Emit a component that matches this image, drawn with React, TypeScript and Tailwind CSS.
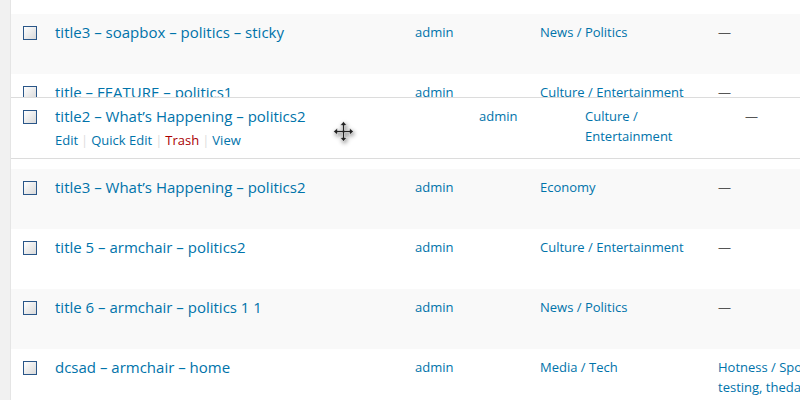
import React from 'react';

type Post = {
  title: string;
  author: string;
  category: string;
  tags?: string[];
  stripe: boolean;
};

const posts: Post[] = [
  { title: 'title3 – soapbox – politics – sticky', author: 'admin', category: 'News / Politics', stripe: true },
  { title: 'title – FEATURE – politics1', author: 'admin', category: 'Culture / Entertainment', stripe: false },
];

const morePosts: Post[] = [
  { title: 'title3 – What’s Happening – politics2', author: 'admin', category: 'Economy', stripe: true },
  { title: 'title 5 – armchair – politics2', author: 'admin', category: 'Culture / Entertainment', stripe: false },
  { title: 'title 6 – armchair – politics 1 1', author: 'admin', category: 'News / Politics', stripe: true },
  {
    title: 'dcsad – armchair – home',
    author: 'admin',
    category: 'Media / Tech',
    tags: ['Hotness / Sports,', 'testing, thedaily'],
    stripe: false,
  },
];

const Checkbox = () => (
  <span className="block w-[14px] h-[14px] border border-[#2a5688] bg-linear-to-br from-white to-[#d9d9d9]" />
);

const MoveCursor = () => (
  <svg
    width="21"
    height="21"
    viewBox="0 0 21 21"
    className="drop-shadow-[1px_2px_2px_rgba(0,0,0,0.45)]"
  >
    <g fill="#222" stroke="#fff" strokeWidth="0.6">
      <path d="M10.5 0.5 L14 4.5 L11.5 4.5 L11.5 9.5 L16.5 9.5 L16.5 7 L20.5 10.5 L16.5 14 L16.5 11.5 L11.5 11.5 L11.5 16.5 L14 16.5 L10.5 20.5 L7 16.5 L9.5 16.5 L9.5 11.5 L4.5 11.5 L4.5 14 L0.5 10.5 L4.5 7 L4.5 9.5 L9.5 9.5 L9.5 4.5 L7 4.5 Z" />
    </g>
  </svg>
);

const Row = ({ post }: { post: Post }) => (
  <div className={`flex shrink-0 h-[60px] ${post.stripe ? 'bg-[#f9f9f9]' : 'bg-white'}`}>
    <div className="w-[34px] shrink-0 pl-3 pt-3">
      <Checkbox />
    </div>
    <div className="w-[360px] shrink-0 px-[10px] pt-2">
      <a className="block text-[15px] leading-[21px] text-[#0073aa]">{post.title}</a>
    </div>
    <div className="w-[125px] shrink-0 px-[10px] pt-2 text-[13px] leading-[20px] text-[#0073aa]">
      {post.author}
    </div>
    <div className="w-[178px] shrink-0 px-[10px] pt-2 text-[13px] leading-[20px] text-[#0073aa]">
      {post.category}
    </div>
    <div className="w-[140px] shrink-0 px-[10px] pt-2 text-[13px] leading-[20px] whitespace-nowrap">
      {post.tags ? (
        post.tags.map((t) => (
          <span key={t} className="block text-[#0073aa]">{t}</span>
        ))
      ) : (
        <span className="text-[#555]">—</span>
      )}
    </div>
  </div>
);

export default function App() {
  return (
    <div
      className="relative flex w-[800px] h-[400px] overflow-hidden bg-white"
      style={{ fontFamily: '"Open Sans", "Noto Sans", sans-serif' }}
    >
      <div className="w-[11px] shrink-0 bg-[#f1f1f1] border-r border-[#e5e5e5]" />
      <div className="flex-1 flex flex-col">
        <div className="h-[14px] shrink-0 bg-white" />
        {posts.map((p) => (
          <Row key={p.title} post={p} />
        ))}
        <div className="h-[35px] shrink-0 bg-white" />
        {morePosts.map((p) => (
          <Row key={p.title} post={p} />
        ))}
      </div>

      {/* row being dragged */}
      <div className="absolute left-[11px] right-0 top-[97px] h-[62px] flex bg-white border-y border-[#dcdcdc]">
        <div className="w-[34px] shrink-0 pl-3 pt-3">
          <Checkbox />
        </div>
        <div className="w-[424px] shrink-0 px-[10px] pt-2">
          <a className="block text-[15px] leading-[21px] text-[#0073aa]">
            title2 – What’s Happening – politics2
          </a>
          <div className="pt-[3px] text-[13px] leading-[20px] text-[#0073aa]">
            <span>Edit</span>
            <span className="text-[#ddd] px-[3px]">|</span>
            <span>Quick Edit</span>
            <span className="text-[#ddd] px-[3px]">|</span>
            <span className="text-[#a00]">Trash</span>
            <span className="text-[#ddd] px-[3px]">|</span>
            <span>View</span>
          </div>
        </div>
        <div className="w-[106px] shrink-0 px-[10px] pt-2 text-[13px] leading-[20px] text-[#0073aa]">
          admin
        </div>
        <div className="w-[160px] shrink-0 px-[10px] pt-2 text-[13px] leading-[20px] text-[#0073aa]">
          <span className="block w-[120px]">Culture / Entertainment</span>
        </div>
        <div className="px-[10px] pt-2 text-[13px] leading-[20px] text-[#555]">—</div>
      </div>

      <div className="absolute left-[333px] top-[121px]">
        <MoveCursor />
      </div>
    </div>
  );
}
